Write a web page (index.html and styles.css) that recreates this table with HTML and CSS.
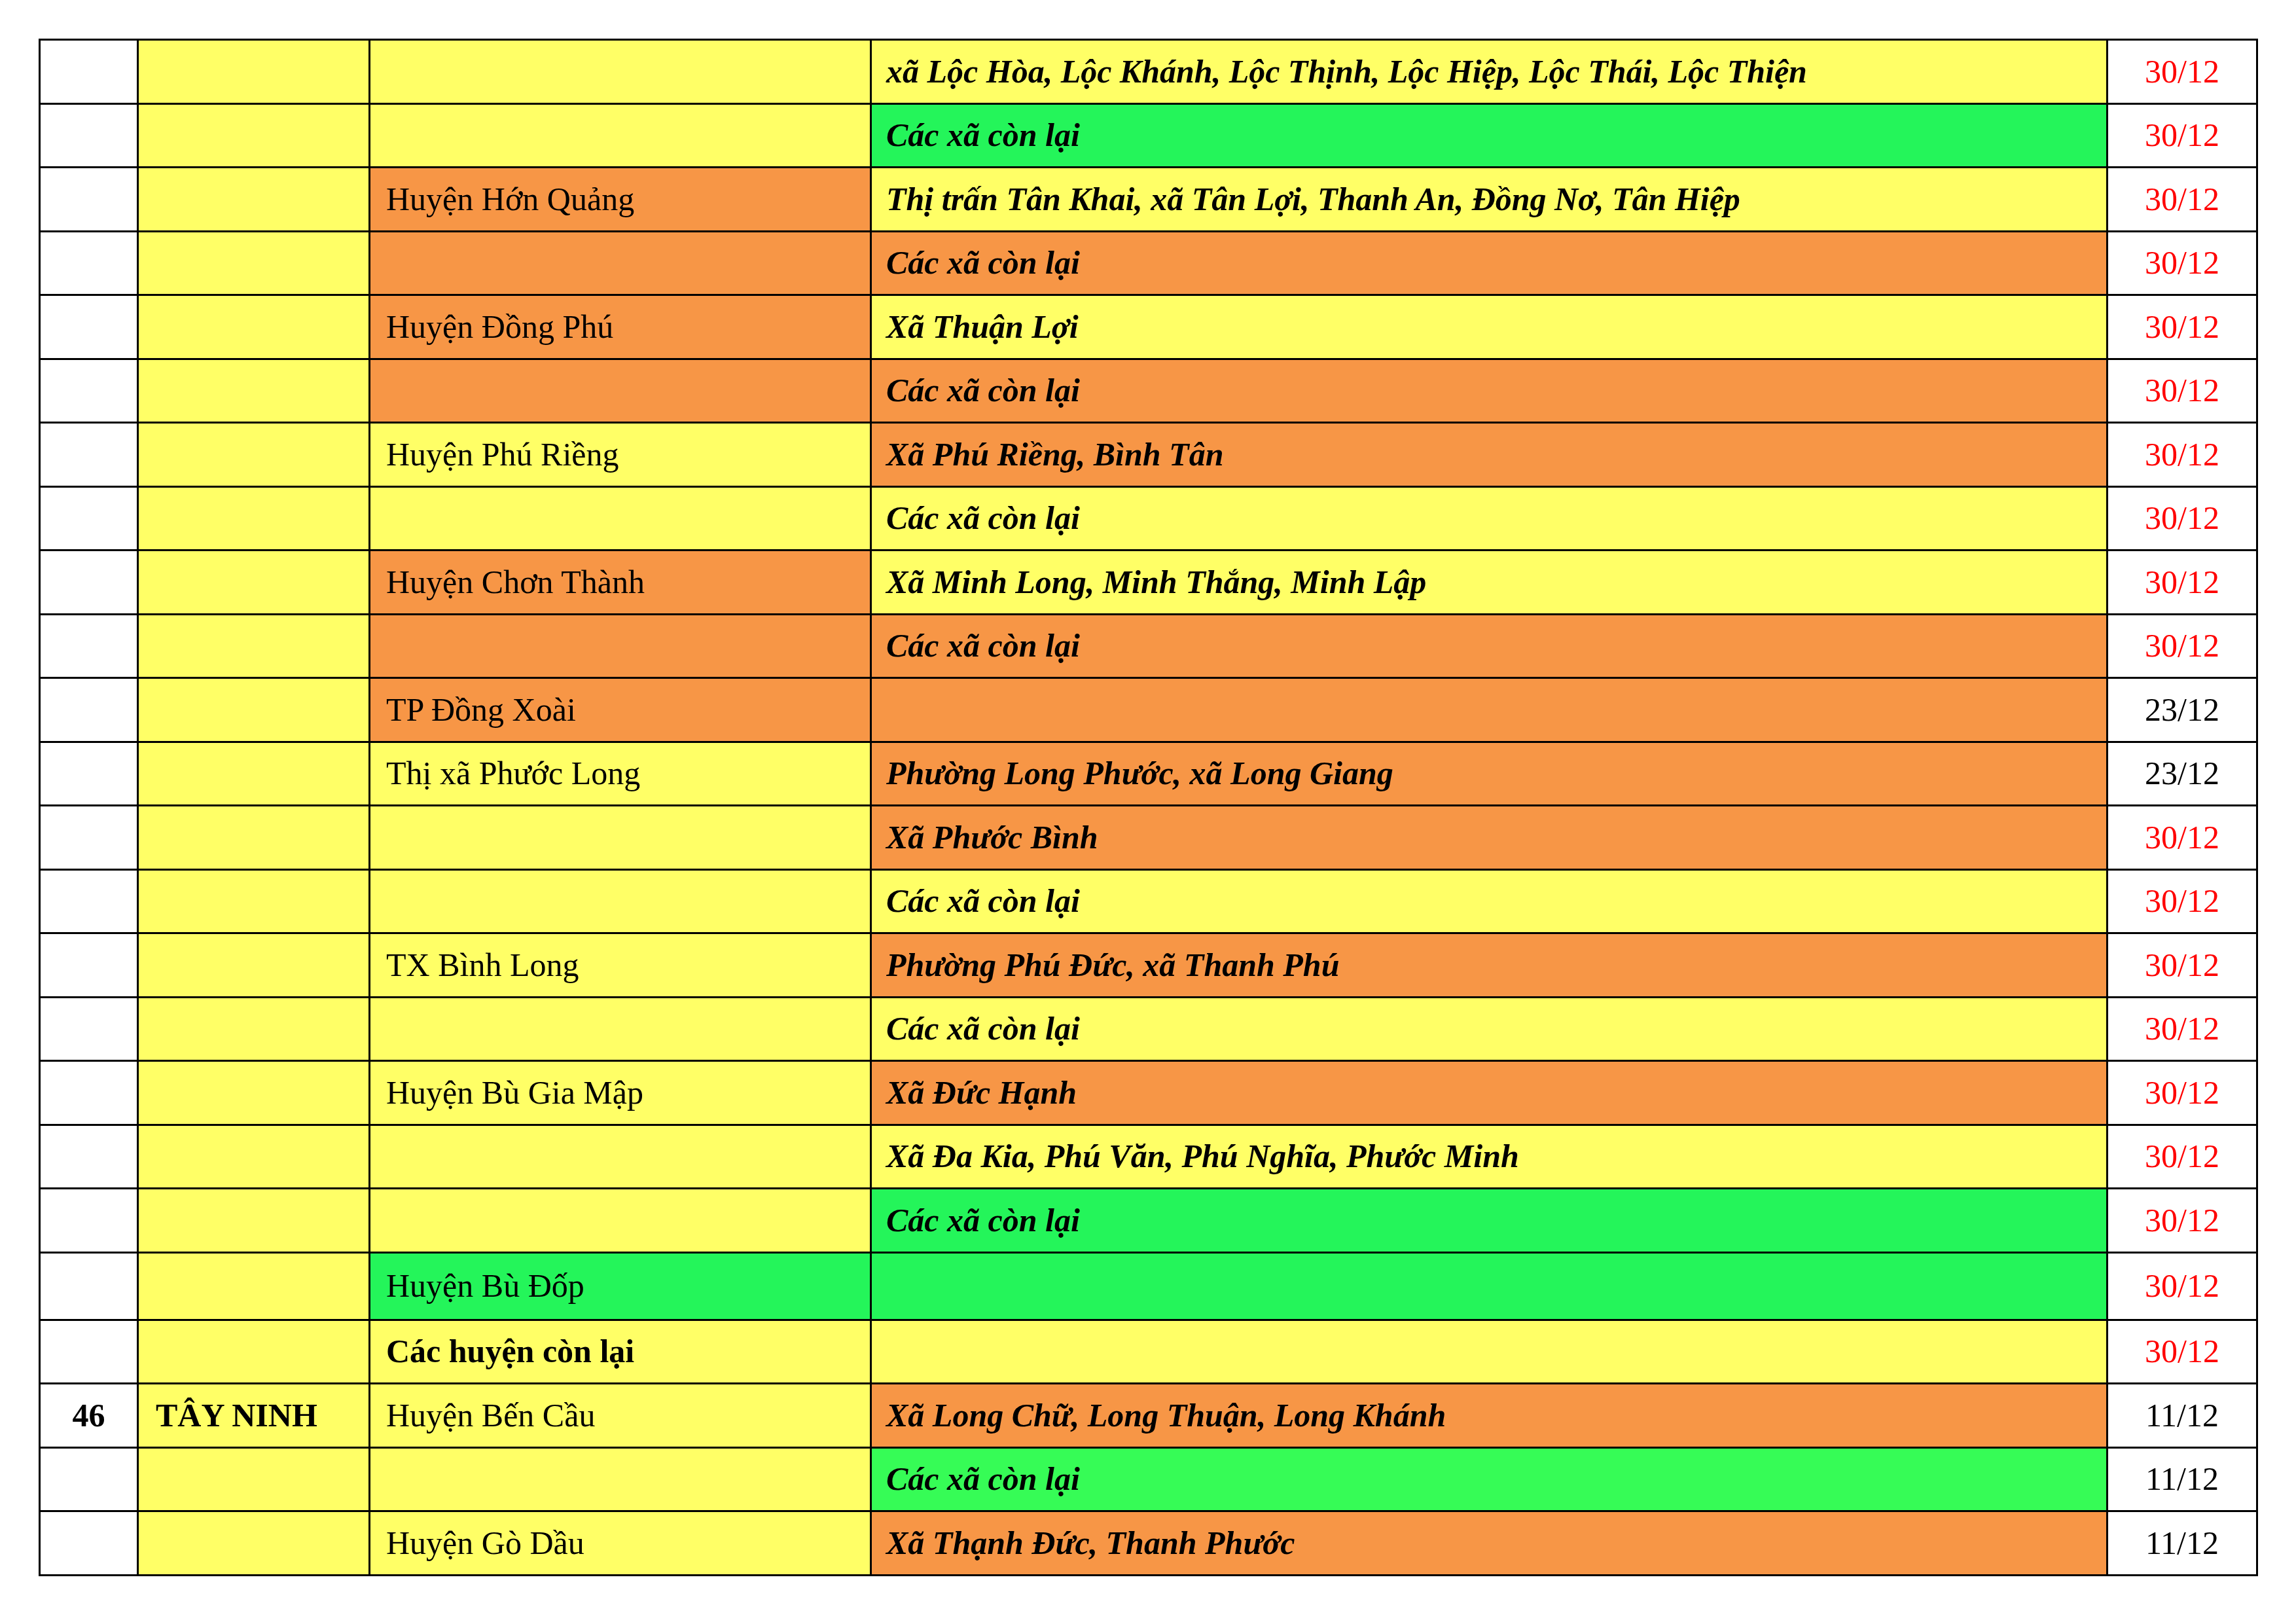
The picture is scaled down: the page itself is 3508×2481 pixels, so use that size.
FILE: index.html
```html
<!DOCTYPE html>
<html lang="vi">
<head>
<meta charset="utf-8">
<title>Bảng</title>
<link rel="stylesheet" href="styles.css">
</head>
<body>
<table class="sheet">
<colgroup>
<col class="c-no"><col class="c-prov"><col class="c-dist"><col class="c-comm"><col class="c-date">
</colgroup>
<tbody>
<tr><td></td><td class="y"></td><td class="y"></td><td class="y comm">xã Lộc Hòa, Lộc Khánh, Lộc Thịnh, Lộc Hiệp, Lộc Thái, Lộc Thiện</td><td class="date red">30/12</td></tr>
<tr><td></td><td class="y"></td><td class="y"></td><td class="g comm">Các xã còn lại</td><td class="date red">30/12</td></tr>
<tr><td></td><td class="y"></td><td class="o dist">Huyện Hớn Quảng</td><td class="y comm">Thị trấn Tân Khai, xã Tân Lợi, Thanh An, Đồng Nơ, Tân Hiệp</td><td class="date red">30/12</td></tr>
<tr><td></td><td class="y"></td><td class="o"></td><td class="o comm">Các xã còn lại</td><td class="date red">30/12</td></tr>
<tr><td></td><td class="y"></td><td class="o dist">Huyện Đồng Phú</td><td class="y comm">Xã Thuận Lợi</td><td class="date red">30/12</td></tr>
<tr><td></td><td class="y"></td><td class="o"></td><td class="o comm">Các xã còn lại</td><td class="date red">30/12</td></tr>
<tr><td></td><td class="y"></td><td class="y dist">Huyện Phú Riềng</td><td class="o comm">Xã Phú Riềng, Bình Tân</td><td class="date red">30/12</td></tr>
<tr><td></td><td class="y"></td><td class="y"></td><td class="y comm">Các xã còn lại</td><td class="date red">30/12</td></tr>
<tr><td></td><td class="y"></td><td class="o dist">Huyện Chơn Thành</td><td class="y comm">Xã Minh Long, Minh Thắng, Minh Lập</td><td class="date red">30/12</td></tr>
<tr><td></td><td class="y"></td><td class="o"></td><td class="o comm">Các xã còn lại</td><td class="date red">30/12</td></tr>
<tr><td></td><td class="y"></td><td class="o dist">TP Đồng Xoài</td><td class="o comm"></td><td class="date">23/12</td></tr>
<tr><td></td><td class="y"></td><td class="y dist">Thị xã Phước Long</td><td class="o comm">Phường Long Phước, xã Long Giang</td><td class="date">23/12</td></tr>
<tr><td></td><td class="y"></td><td class="y"></td><td class="o comm">Xã Phước Bình</td><td class="date red">30/12</td></tr>
<tr><td></td><td class="y"></td><td class="y"></td><td class="y comm">Các xã còn lại</td><td class="date red">30/12</td></tr>
<tr><td></td><td class="y"></td><td class="y dist">TX Bình Long</td><td class="o comm">Phường Phú Đức, xã Thanh Phú</td><td class="date red">30/12</td></tr>
<tr><td></td><td class="y"></td><td class="y"></td><td class="y comm">Các xã còn lại</td><td class="date red">30/12</td></tr>
<tr><td></td><td class="y"></td><td class="y dist">Huyện Bù Gia Mập</td><td class="o comm">Xã Đức Hạnh</td><td class="date red">30/12</td></tr>
<tr><td></td><td class="y"></td><td class="y"></td><td class="y comm">Xã Đa Kia, Phú Văn, Phú Nghĩa, Phước Minh</td><td class="date red">30/12</td></tr>
<tr><td></td><td class="y"></td><td class="y"></td><td class="g comm">Các xã còn lại</td><td class="date red">30/12</td></tr>
<tr class="tall"><td></td><td class="y"></td><td class="g dist">Huyện Bù Đốp</td><td class="g comm"></td><td class="date red">30/12</td></tr>
<tr><td></td><td class="y"></td><td class="y dist strong">Các huyện còn lại</td><td class="y comm"></td><td class="date red">30/12</td></tr>
<tr><td class="no">46</td><td class="y prov">TÂY NINH</td><td class="y dist">Huyện Bến Cầu</td><td class="o comm">Xã Long Chữ, Long Thuận, Long Khánh</td><td class="date">11/12</td></tr>
<tr><td></td><td class="y"></td><td class="y"></td><td class="g2 comm">Các xã còn lại</td><td class="date">11/12</td></tr>
<tr><td></td><td class="y"></td><td class="y dist">Huyện Gò Dầu</td><td class="o comm">Xã Thạnh Đức, Thanh Phước</td><td class="date">11/12</td></tr>
</tbody>
</table>
</body>
</html>
```
FILE: styles.css
```css
html, body {
  margin: 0;
  padding: 0;
  background: #ffffff;
}
body {
  padding: 59px 0 0 59px;
  font-family: "Liberation Serif", "Times New Roman", serif;
  font-size: 50px;
  color: #000000;
}
.sheet {
  border-collapse: collapse;
  table-layout: fixed;
  width: 3391px;
  border: 3px solid #000;
}
.c-no { width: 150px; }
.c-prov { width: 354px; }
.c-dist { width: 766px; }
.c-comm { width: 1889px; }
.c-date { width: 229px; }
.sheet tr { height: 97.5px; }
.sheet tr.tall { height: 103px; }
.sheet td {
  border: 3px solid #000;
  padding: 0 0 0 24px;
  vertical-align: middle;
  white-space: nowrap;
  overflow: hidden;
  line-height: 1.1;
}
.sheet .y { background: #ffff66; }
.sheet .o { background: #f79646; }
.sheet .g { background: #24f55a; }
.sheet .g2 { background: #36fc56; }
.sheet td.comm {
  font-weight: bold;
  font-style: italic;
  padding-left: 22px;
}
.sheet td.strong { font-weight: bold; }
.sheet td.no {
  font-weight: bold;
  text-align: center;
  padding: 0;
}
.sheet td.prov {
  font-weight: bold;
  padding-left: 26px;
}
.sheet td.date {
  text-align: center;
  padding: 0;
}
.sheet td.red { color: #ff0000; }
```
